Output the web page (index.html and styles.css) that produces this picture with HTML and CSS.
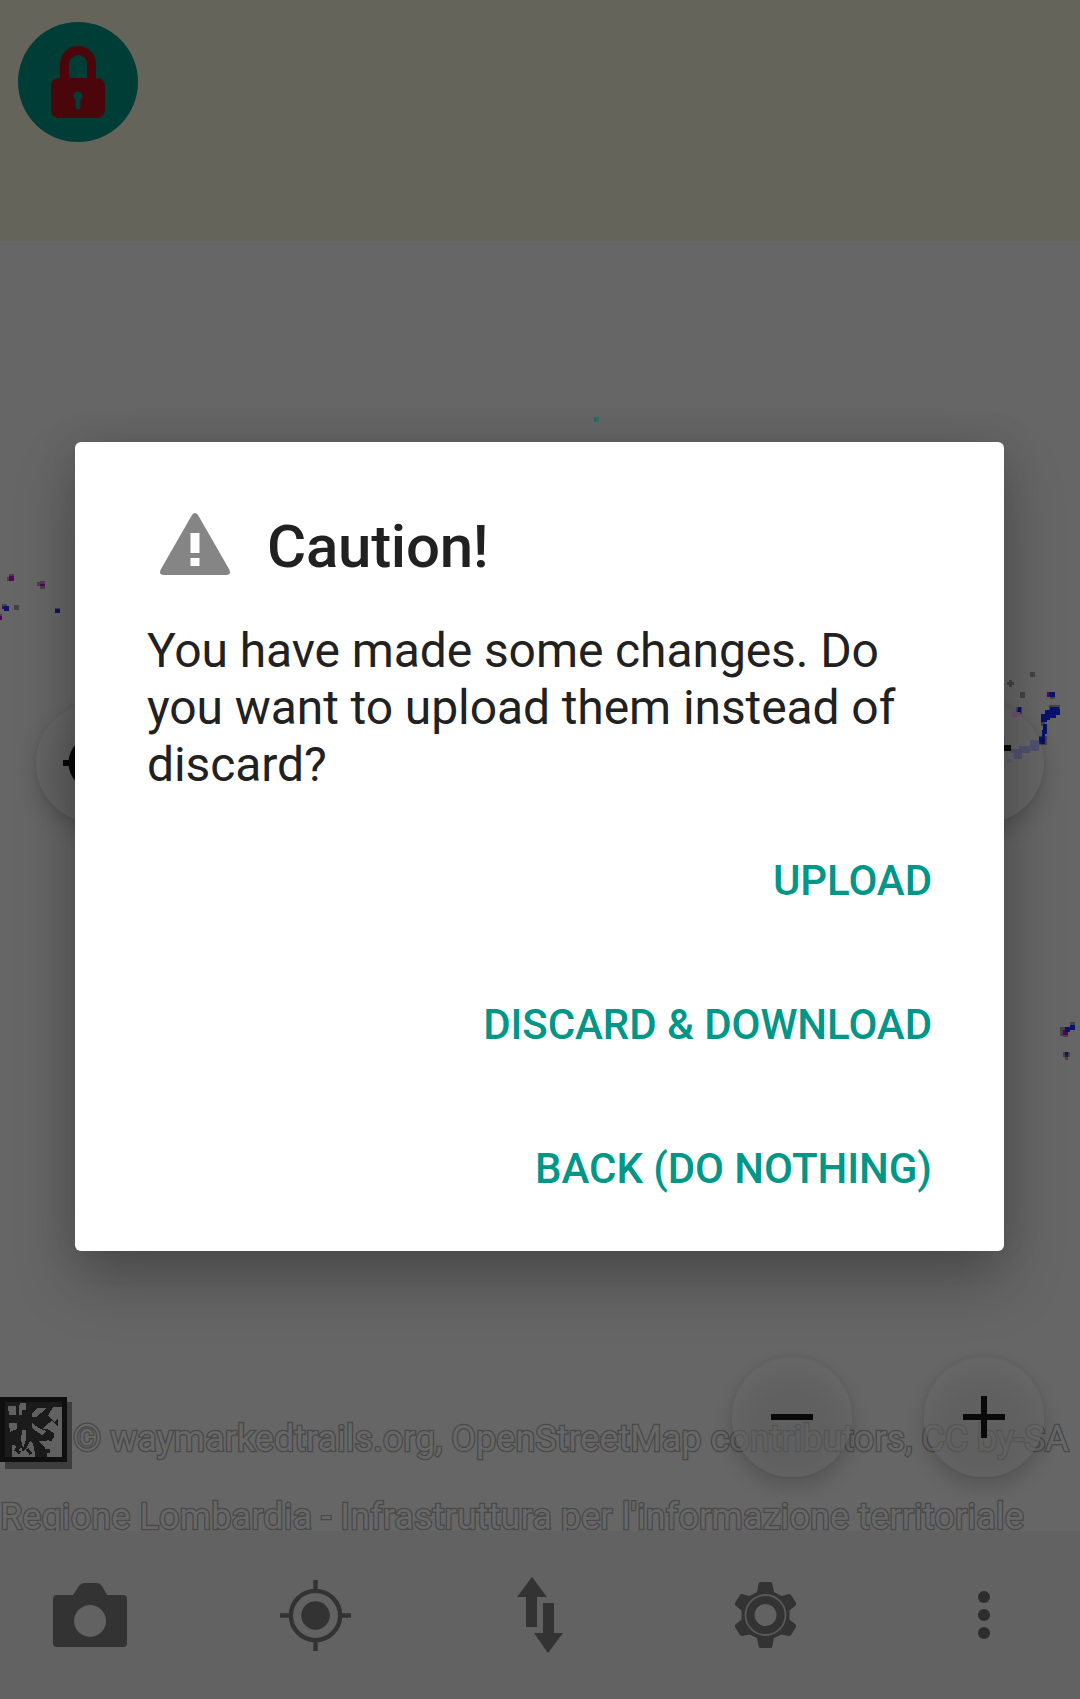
FILE: index.html
```html
<!DOCTYPE html>
<html lang="en">
<head>
<meta charset="utf-8">
<title>Caution</title>
<link rel="stylesheet" href="styles.css">
</head>
<body>
<div class="app">
  <main class="map">
    <div class="tile-strip">
      <button class="lock" aria-label="Unlock">
        <svg width="56" height="74" viewBox="0 0 56 74">
          <path d="M10 34V18a18 18 0 0 1 36 0v16h-9V18a9 9 0 0 0-18 0v16z"/>
          <rect x="1" y="32" width="54" height="40" rx="8"/>
          <path class="keyhole" d="M28 45.500a4.500 4.500 0 0 1 2.500 8.200V61a2.500 2.500 0 0 1-5 0v-7.300A4.500 4.500 0 0 1 28 45.500z"/>
        </svg>
      </button>
    </div>
    <div class="attribution">
      <div class="credit">
        <svg class="logo" width="72" height="72" viewBox="0 0 72 72" shape-rendering="crispEdges">
          <rect class="logo-shadow" x="5" y="5" width="67" height="67"/>
          <rect class="logo-frame" x="0" y="0" width="67" height="65"/>
          <rect class="logo-map" x="5" y="5" width="57" height="55"/>
          <path class="clearings" d="M8 9h8v9H9zM20 6h6v7h-4v5h-3v-8zM32 17l5-6h10l-6 5-5 4h-4zM48 19l5-9h9v50H47v-4h3v-4h-9v-4h-3v-4h8l8-3v-5l-7-4h-5l4-4 6-4 6 6v-8l-4 3zM9 26h8v6l-7 3zM32 26l7 5 7 3-4 4-6-4-4-3zM22 33h4v10l-3 8-2-8zM12 48h3l3 6 3-4 2 5 4-5 3-6 3 3 2 9v4H12z"/>
          <path class="trails" d="M37 45l6 6-4 6M43 52l6 3M15 52l5 4M27 52l4 5M44 40l8 3"/>
        </svg>
        <span>© waymarkedtrails.org, OpenStreetMap contributors, CC by-SA</span>
      </div>
      <div class="credit credit-region">Regione Lombardia - Infrastruttura per l'informazione territoriale</div>
    </div>
    <svg class="traces" width="1080" height="1531" viewBox="0 0 1080 1531" shape-rendering="crispEdges">
      <g fill="#444"><path d="M9 574h5v7H7v-4h2zM40 581h5v8h-5v-3h-3v-4h3zM2 604h5v5H2zM14 605h5v5h-5zM0 614h2v6H0zM55 608h5v5h-5zM1009 680h3v7h-3zM1007 682h7v3h-7zM1020 692h5v6h-5zM1030 672h5v5h-5zM1050 692h5v7h-5zM1041 714h4v12h-4zM1049 705h11v5h-11zM1039 736h8v9h-8zM1060 1027h5v9h-5zM1070 1022h5v5h-5zM1063 1052h7v5h-7zM1065 1057h3v3h-3zM1063 1034h5v3h-5zM1016 707h6v7h-6z"/></g>
      <g fill="#5b005b"><path d="M9 576h5v5H9zM40 584h5v2h-5zM2 606h3v3H2zM0 616h2v4H0zM1047 692h3v5h-3zM1017 711h3v4h-3zM1063 1030h5v5h-5zM1065 1055h3v2h-3z"/></g>
      <g fill="#09126c"><path d="M4 606h5v5H4zM55 609h5v4h-5zM1050 692h5v5h-5zM1018 707h3v5h-3zM1050 707h9v2h1v6h-4v3h-6v2h-3v2h-6v-8h4v-4h5zM1043 724h4v10h-2v10h-6v-7h3zM1065 1027h5v-2h5v5h-5v2h-5zM1065 1052h3v3h-3z"/></g>
      <path fill="#4b4e74" d="M1030 740h9v11h-9v2h-8v6h-8v-6h-3v-4h8v-3h11z"/>
      <path fill="#575973" d="M1007 759h5v4h-5zM1004 737h1v8h-1z"/>
      <path fill="#754c79" d="M1012 712h8v5h-8z"/>
      <path fill="#3d5e5e" d="M594 417h5v5h-5z"/><path fill="#2b7070" d="M596 417h3v5h-3z"/>
    </svg>
    <div class="controls controls-middle">
      <button class="fab" aria-label="Follow position"><svg width="72" height="72" viewBox="0 0 72 72"><path d="M36 3v66M3 36h66" stroke="#090909" stroke-width="6"/><circle cx="36" cy="36" r="27.500" fill="#090909"/></svg></button>
      <button class="fab layers" aria-label="Add"><svg width="72" height="72" viewBox="0 0 72 72"><path d="M10 21h53" stroke="#090909" stroke-width="6"/></svg></button>
    </div>
    <div class="controls controls-zoom">
      <button class="fab" aria-label="Zoom out"><svg width="42" height="42" viewBox="0 0 42 42"><path d="M0 21h42" stroke="#090909" stroke-width="6"/></svg></button>
      <button class="fab" aria-label="Zoom in"><svg width="42" height="42" viewBox="0 0 42 42"><path d="M0 21h42M21 0v42" stroke="#090909" stroke-width="6"/></svg></button>
    </div>
  </main>
  <nav class="toolbar">
    <button class="tool" aria-label="Camera"><svg width="74" height="64" viewBox="0 0 74 64"><path fill-rule="evenodd" d="M4 12h16l6-9q2-3 5-3h13q3 0 5 3l5 9h16q4 0 4 4v44q0 4-4 4H4q-4 0-4-4V16q0-4 4-4zM37 22a16 16 0 1 0 .1 0z"/></svg></button>
    <button class="tool" aria-label="Locate"><svg width="71" height="71" viewBox="0 0 72 72"><g fill="none" stroke="#333" stroke-width="4.500"><circle cx="36" cy="36" r="25"/><path d="M36 0v10M36 62v10M0 36h11M61 36h11"/></g><circle cx="36" cy="36" r="14.500"/></svg></button>
    <button class="tool" aria-label="Transfer"><svg width="46" height="76" viewBox="0 0 46 76"><path d="M15 0l15 20H20v30H9V20H0zM26 26h11v30h9L31 76 17 56h9z"/></svg></button>
    <button class="tool" aria-label="Settings"><svg width="61" height="66" viewBox="0 0 61 66"><path fill-rule="evenodd" d="M25.500 0h10q1.500 0 1.800 1.500L39 10l7.500 4 7.500-2q1.500 0 2 1l5 8q.5 1.500-.5 2.500l-6 5v9l6 5q1 1 .5 2.500l-5 8q-.5 1-2 1l-7.500-1.500L39 56l-1.700 8.500q-.3 1.500-1.800 1.500h-10q-1.500 0-1.800-1.500L22 56l-7.500-3.500L7 54q-1.500 0-2-1l-5-8q-.5-1.500.5-2.500l6-5v-9l-6-5Q-.5 22.500 0 21l5-8q.5-1 2-1l7.500 2 7.500-4 1.700-8.500Q24 0 25.500 0zM30.500 22a11 11 0 1 0 .1 0z"/><circle cx="30.500" cy="33" r="20" fill="none" stroke="#595959" stroke-width="1.800"/></svg></button>
    <button class="tool more" aria-label="More"><svg width="12" height="48" viewBox="0 0 12 48"><circle cx="6" cy="6" r="6"/><circle cx="6" cy="24" r="6"/><circle cx="6" cy="42" r="6"/></svg></button>
  </nav>
  <section class="dialog" role="alertdialog">
    <header class="dialog-head">
      <svg width="70" height="62" viewBox="0 0 70 62"><path fill="#858585" d="M32 2q3-4 6 0l31 54q3 6-3 6H4q-6 0-3-6z"/><path fill="#fff" d="M30.500 20h9v20h-9zM30.500 45h9v8h-9z"/></svg>
      <h1>Caution!</h1>
    </header>
    <p>You have made some changes. Do you want to upload them instead of discard?</p>
    <div class="actions">
      <button>UPLOAD</button>
      <button>DISCARD &amp; DOWNLOAD</button>
      <button>BACK (DO NOTHING)</button>
    </div>
  </section>
</div>
</body>
</html>
```
FILE: styles.css
```css
* { box-sizing: border-box; }
body { margin: 0; font-family: Roboto, sans-serif; }
button { border: 0; background: none; padding: 0; font: inherit; }
svg { display: block; flex: none; }

.app {
  position: relative;
  display: flex;
  flex-direction: column;
  width: 1080px;
  height: 1699px;
  overflow: hidden;
  background: #666;
}

.map {
  position: relative;
  flex: 1;
  display: flex;
  flex-direction: column;
  justify-content: space-between;
  overflow: hidden;
}
.tile-strip { height: 241px; padding: 22px 18px; background: #64645b; }
.lock {
  display: flex;
  justify-content: center;
  width: 120px;
  height: 120px;
  padding-top: 24px;
  border-radius: 50%;
  background: #003d36;
  fill: #4b060b;
}
.keyhole { fill: #003d36; }

.attribution { height: 134px; }
.credit {
  display: flex;
  height: 78px;
  font-size: 36px;
  line-height: 85px;
  white-space: nowrap;
  color: #676767;
  -webkit-text-stroke: 2.6px #494949;
  paint-order: stroke fill;
}
.credit-region { letter-spacing: .1px; }
.logo { margin-right: 1px; }
.logo-shadow { fill: #3d3d3d; }
.logo-frame { fill: #0f0f0f; }
.logo-map { fill: #1b1b1b; }
.clearings { fill: #616161; }
.trails { fill: none; stroke: #191919; stroke-width: 3; }

.traces { position: absolute; inset: 0; }
.controls { position: absolute; left: 36px; right: 36px; display: flex; }
.controls-middle { top: 703px; justify-content: space-between; }
.controls-zoom { top: 1357px; justify-content: flex-end; gap: 72px; }
.fab {
  display: flex;
  align-items: center;
  justify-content: center;
  width: 120px;
  height: 120px;
  border-radius: 50%;
  background: radial-gradient(circle at 50% 60%, rgba(92, 92, 92, .6) 40%, rgba(101, 101, 101, .6) 72%);
  box-shadow: 0 10px 20px rgba(0, 0, 0, .17), 0 0 5px rgba(0, 0, 0, .06);
}
.layers { background: rgba(101, 101, 101, .2); }

.toolbar {
  display: flex;
  align-items: center;
  gap: 151px;
  height: 168px;
  padding-left: 53px;
  background: #626262;
  fill: #333;
}
.tool { display: flex; flex: none; justify-content: center; width: 74px; }
.more { margin-left: -6px; fill: #2d2d2d; }

.dialog {
  position: absolute;
  left: 75px;
  top: 442px;
  width: 929px;
  height: 809px;
  padding: 70px 72px 0;
  border-radius: 6px;
  background: #fff;
  color: #212121;
  box-shadow: 0 30px 60px rgba(0, 0, 0, .25), 0 0 40px rgba(0, 0, 0, .1);
}
.dialog-head { display: flex; gap: 37px; height: 70px; padding-left: 13px; }
.dialog-head svg { margin-top: 1px; }
h1 { margin: 0; font-size: 60px; line-height: 70px; font-weight: 500; letter-spacing: -.25px; }
p { margin: 40px 0 0; font-size: 48px; line-height: 57px; letter-spacing: -.09px; }
.actions { display: flex; flex-direction: column; align-items: flex-end; padding-top: 15px; }
.actions button { height: 144px; font-size: 42px; font-weight: 500; letter-spacing: -.06px; color: #009688; }
```
